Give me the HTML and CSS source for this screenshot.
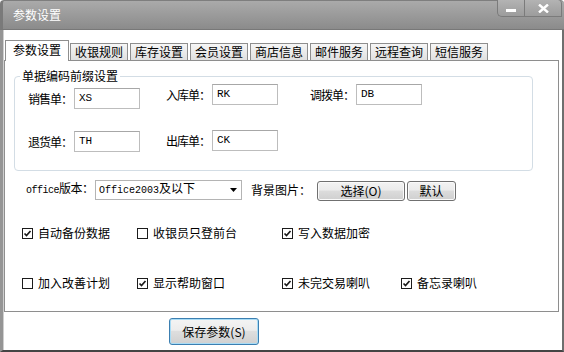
FILE: index.html
```html
<!DOCTYPE html>
<html lang="zh-CN">
<head>
    <meta charset="UTF-8">
    <title>参数设置</title>
    <link rel="stylesheet" href="styles.css">
</head>
<body>
    <div class="window">
        <div class="titlebar">
            <span class="title">参数设置</span>
            <div class="caption-btns">
                <button class="cap min">
                    <svg width="10" height="3" viewBox="0 0 10 3"><rect width="10" height="3" fill="#fff"/></svg>
                </button>
                <button class="cap close">
                    <svg width="11" height="9" viewBox="0 0 11 9"><path d="M1 0.5 L10 8.5 M10 0.5 L1 8.5" stroke="#fff" stroke-width="2.4"/></svg>
                </button>
            </div>
        </div>

        <div class="client">
            <div class="tabs">
                <div class="tab active">参数设置</div>
                <div class="tab">收银规则</div>
                <div class="tab">库存设置</div>
                <div class="tab">会员设置</div>
                <div class="tab">商店信息</div>
                <div class="tab">邮件服务</div>
                <div class="tab">远程查询</div>
                <div class="tab">短信服务</div>
            </div>

            <div class="panel">
                <fieldset class="group">
                    <legend>单据编码前缀设置</legend>
                    <div class="fields">
                        <div class="field f1"><span class="lbl">销售单：</span><span class="input">XS</span></div>
                        <div class="field"><span class="lbl">入库单：</span><span class="input">RK</span></div>
                        <div class="field"><span class="lbl">调拨单：</span><span class="input">DB</span></div>
                        <div class="field f4"><span class="lbl">退货单：</span><span class="input">TH</span></div>
                        <div class="field"><span class="lbl">出库单：</span><span class="input">CK</span></div>
                    </div>
                </fieldset>

                <div class="office-row">
                    <span class="olbl"><span class="mono">office</span>版本：</span>
                    <div class="combo">
                        <span><span class="mono">Office2003</span>及以下</span>
                        <svg width="7" height="4" viewBox="0 0 7 4"><path d="M0 0 H7 L3.5 4 Z" fill="#000"/></svg>
                    </div>
                    <span class="bglbl">背景图片：</span>
                    <button class="btn pick">选择(O)</button>
                    <button class="btn def">默认</button>
                </div>

                <div class="checks">
                    <div class="chk"><span class="cb"><svg width="9" height="9" viewBox="0 0 9 9"><path d="M1.5 4.5 L3.5 6.5 L7.5 2" fill="none" stroke="#1a1a1a" stroke-width="1.7"/></svg></span>自动备份数据</div>
                    <div class="chk"><span class="cb"></span>收银员只登前台</div>
                    <div class="chk"><span class="cb"><svg width="9" height="9" viewBox="0 0 9 9"><path d="M1.5 4.5 L3.5 6.5 L7.5 2" fill="none" stroke="#1a1a1a" stroke-width="1.7"/></svg></span>写入数据加密</div>
                    <div class="chk"></div>
                    <div class="chk"><span class="cb"></span>加入改善计划</div>
                    <div class="chk"><span class="cb"><svg width="9" height="9" viewBox="0 0 9 9"><path d="M1.5 4.5 L3.5 6.5 L7.5 2" fill="none" stroke="#1a1a1a" stroke-width="1.7"/></svg></span>显示帮助窗口</div>
                    <div class="chk"><span class="cb"><svg width="9" height="9" viewBox="0 0 9 9"><path d="M1.5 4.5 L3.5 6.5 L7.5 2" fill="none" stroke="#1a1a1a" stroke-width="1.7"/></svg></span>未完交易喇叭</div>
                    <div class="chk"><span class="cb"><svg width="9" height="9" viewBox="0 0 9 9"><path d="M1.5 4.5 L3.5 6.5 L7.5 2" fill="none" stroke="#1a1a1a" stroke-width="1.7"/></svg></span>备忘录喇叭</div>
                </div>
            </div>

            <div class="footer">
                <button class="btn save">保存参数(S)</button>
            </div>
        </div>
    </div>
</body>
</html>
```

FILE: styles.css
```css
body {
    margin: 0;
    font-family: "Noto Sans CJK SC", sans-serif;
    font-size: 12px;
    line-height: 14px;
    color: #000;
    background: #fff;
}
button {
    font-family: inherit;
    font-size: 12px;
    color: #000;
    padding: 0;
    cursor: default;
}
.mono {
    font-family: "Liberation Mono", monospace;
    font-size: 10px;
}
.window {
    width: 564px;
    height: 352px;
    display: flex;
    flex-direction: column;
    background: #fff;
    overflow: hidden;
}
.titlebar {
    flex: none;
    height: 30px;
    box-sizing: border-box;
    display: flex;
    align-items: flex-start;
    background: linear-gradient(#aaaaaa, #8b8b8b);
    border-top: 1px solid #7e7e7e;
    border-left: 3px solid #7a7a7a;
    border-bottom: 1px solid #787878;
    border-top-left-radius: 4px;
    border-top-right-radius: 4px;
}
.title {
    color: #fff;
    padding-left: 10px;
    line-height: 28px;
}
.caption-btns {
    margin-left: auto;
    margin-right: 2px;
    margin-top: -1px;
    display: flex;
}
.cap {
    height: 17px;
    display: flex;
    align-items: center;
    justify-content: center;
    background: linear-gradient(#b3b3b3, #9c9c9c);
    border: 1px solid #7b7b7b;
    border-top: none;
}
.cap.min {
    width: 27px;
    border-bottom-left-radius: 5px;
    border-right: none;
    padding-top: 5px;
}
.cap.close {
    width: 38px;
    border-top-right-radius: 4px;
}
.client {
    flex: 1;
    border-left: 3px solid #959595;
    border-right: 2px solid #6e6e6e;
    border-bottom: 2px solid #444;
    padding: 10px 3px 0 1px;
    box-shadow: inset 1px 0 0 #cfcfcf;
}
.tabs {
    height: 20px;
    display: flex;
    align-items: flex-end;
    padding-left: 1px;
}
.tab {
    box-sizing: border-box;
    height: 17px;
    line-height: 15px;
    padding: 0 4px;
    margin-left: 2px;
    border: 1px solid #8e8e8e;
    border-bottom: none;
    background: linear-gradient(#f6f6f6, #e0e0e0);
    white-space: nowrap;
}
.tab.active {
    position: relative;
    z-index: 1;
    height: 21px;
    line-height: 18px;
    margin: 0 -1px -1px 0;
    padding: 0 7px;
    background: #fff;
}
.panel {
    height: 252px;
    box-sizing: border-box;
    border: 1px solid #8e8e8e;
}
.group {
    margin: 8px 25px 0 9px;
    padding: 0 0 18px 0;
    border: 1px solid #d3dde5;
    border-radius: 4px;
    min-width: 0;
}
.group legend {
    margin-left: 5px;
    padding: 0 2px;
    line-height: 14px;
}
.fields {
    display: grid;
    grid-template-columns: 138px 144px auto;
    row-gap: 21px;
    padding: 1px 0 0 13px;
    align-items: start;
}
.field {
    display: flex;
    align-items: center;
    white-space: nowrap;
}
.field.f1 {
    margin-top: 4px;
}
.field.f4 {
    margin-top: 1px;
}
.lbl {
    flex: none;
    width: 46px;
    letter-spacing: -1px;
}
.input {
    flex: none;
    box-sizing: border-box;
    width: 66px;
    height: 21px;
    padding: 2px 4px;
    line-height: 14px;
    font-family: "Liberation Mono", monospace;
    font-size: 11px;
    border: 1px solid #bdbdbd;
    border-top-color: #a7a7a7;
}
.office-row {
    margin-top: 8px;
    padding-left: 21px;
    height: 21px;
    display: flex;
    align-items: center;
    white-space: nowrap;
}
.olbl {
    flex: none;
    width: 69px;
    letter-spacing: -0.5px;
}
.combo {
    flex: none;
    box-sizing: border-box;
    width: 147px;
    height: 20px;
    padding: 0 4px 0 3px;
    display: flex;
    align-items: center;
    justify-content: space-between;
    border: 1px solid #b4b4b4;
}
.bglbl {
    flex: none;
    margin: 0 6px 0 9px;
}
.btn {
    flex: none;
    box-sizing: border-box;
    height: 20px;
    border: 1px solid #707070;
    border-radius: 3px;
    background: linear-gradient(#f3f3f3, #ebebeb 45%, #dcdcdc 50%, #cfcfcf);
    box-shadow: inset 0 0 0 1px #fafafa;
}
.btn.pick {
    width: 88px;
    margin-top: 2px;
}
.btn.def {
    width: 49px;
    margin: 2px 0 0 2px;
}
.checks {
    margin-top: 26px;
    padding-left: 17px;
    display: grid;
    grid-template-columns: 115px 145px 119px auto;
    row-gap: 36px;
    white-space: nowrap;
}
.chk {
    display: flex;
    align-items: center;
    gap: 5px;
    height: 14px;
}
.cb {
    flex: none;
    box-sizing: border-box;
    width: 11px;
    height: 11px;
    border: 1px solid #1c1c1c;
    background: #fff;
    display: flex;
    align-items: center;
    justify-content: center;
}
.footer {
    padding: 6px 0 0 165px;
}
.btn.save {
    width: 90px;
    height: 27px;
    border: 1px solid #3c7fb1;
    box-shadow: inset 0 0 0 1px #a8dcf6;
    background: linear-gradient(#f4f4f4, #ececec 45%, #dedede 50%, #d0d0d0);
}
```
